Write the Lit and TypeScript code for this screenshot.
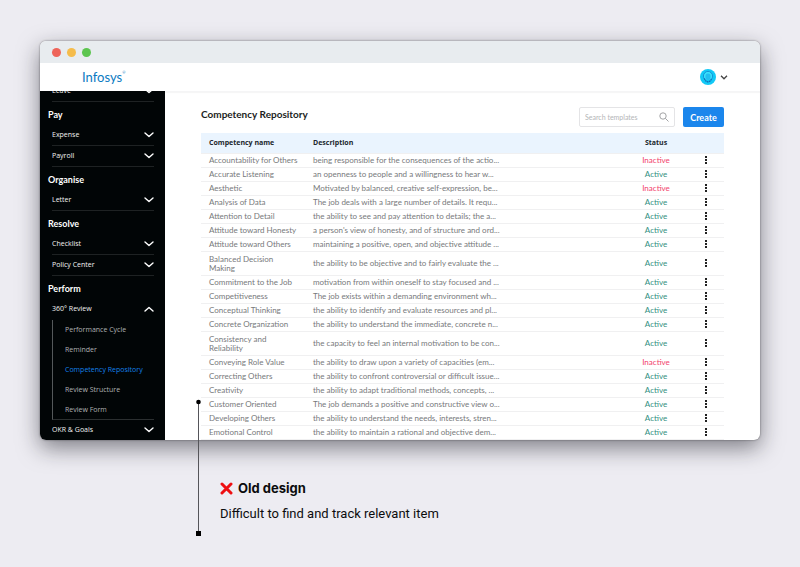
import { LitElement, html, svg, css } from "lit";
import { customElement, property } from "lit/decorators.js";

interface Competency {
  name: string;
  text: string;
  active?: boolean;
}

const row = (name: string, text: string, active = true): Competency => ({ name, text, active });

const COMPETENCIES: Competency[] = [
  row("Accountability for Others", "being responsible for the consequences of the actio...", false),
  row("Accurate Listening", "an openness to people and a willingness to hear w..."),
  row("Aesthetic", "Motivated by balanced, creative self-expression, be...", false),
  row("Analysis of Data", "The job deals with a large number of details. It requ..."),
  row("Attention to Detail", "the ability to see and pay attention to details; the a..."),
  row("Attitude toward Honesty", "a person's view of honesty, and of structure and ord..."),
  row("Attitude toward Others", "maintaining a positive, open, and objective attitude ..."),
  row("Balanced Decision\nMaking", "the ability to be objective and to fairly evaluate the ..."),
  row("Commitment to the Job", "motivation from within oneself to stay focused and ..."),
  row("Competitiveness", "The job exists within a demanding environment wh..."),
  row("Conceptual Thinking", "the ability to identify and evaluate resources and pl..."),
  row("Concrete Organization", "the ability to understand the immediate, concrete n..."),
  row("Consistency and\nReliability", "the capacity to feel an internal motivation to be con..."),
  row("Conveying Role Value", "the ability to draw upon a variety of capacities (em...", false),
  row("Correcting Others", "the ability to confront controversial or difficult issue..."),
  row("Creativity", "the ability to adapt traditional methods, concepts, ..."),
  row("Customer Oriented", "The job demands a positive and constructive view o..."),
  row("Developing Others", "the ability to understand the needs, interests, stren..."),
  row("Emotional Control", "the ability to maintain a rational and objective dem..."),
];

interface NavItem {
  label: string;
  children?: string[];
}

const NAV: { title?: string; items: NavItem[] }[] = [
  { items: [{ label: "Leave" }] },
  { title: "Pay", items: [{ label: "Expense" }, { label: "Payroll" }] },
  { title: "Organise", items: [{ label: "Letter" }] },
  { title: "Resolve", items: [{ label: "Checklist" }, { label: "Policy Center" }] },
  {
    title: "Perform",
    items: [
      {
        label: "360° Review",
        children: [
          "Performance Cycle",
          "Reminder",
          "Competency Repository",
          "Review Structure",
          "Review Form",
        ],
      },
      { label: "OKR & Goals" },
    ],
  },
];

const chevron = (up = false) => html`<svg class="chevron" viewBox="0 0 10 6" aria-hidden="true">
  ${up ? svg`<path d="M1 5 L5 1.4 L9 5" />` : svg`<path d="M1 1 L5 4.6 L9 1" />`}
</svg>`;

@customElement("side-nav")
class SideNav extends LitElement {
  @property() current = "";

  static styles = css`
    :host {
      display: block;
      overflow: hidden;
      background: #010506;
      color: #f2f2f2;
      font-family: "Open Sans", Lato, sans-serif;
      font-size: 7px;
    }
    nav {
      margin-top: -10px;
      padding: 0 11px 0 12px;
    }
    h2 {
      box-sizing: border-box;
      height: 23px;
      margin: 0 0 0 -4px;
      padding-top: 4px;
      font-family: Lato, sans-serif;
      font-size: 9px;
      line-height: 18px;
      font-weight: 700;
      color: #fff;
    }
    button {
      display: flex;
      align-items: center;
      justify-content: space-between;
      box-sizing: border-box;
      width: 100%;
      height: 21px;
      padding: 0;
      border: 0;
      border-bottom: 1px solid #1e2223;
      background: none;
      color: inherit;
      font: inherit;
      line-height: 20px;
    }
    button.open {
      border-bottom-color: transparent;
    }
    .chevron {
      width: 10px;
      height: 6px;
      fill: none;
      stroke: #fff;
      stroke-width: 1.4;
      stroke-linecap: round;
      stroke-linejoin: round;
    }
    ul {
      margin: 0;
      padding: 0 0 0 12px;
      list-style: none;
      border-left: 1px solid #54585a;
      border-bottom: 1px solid #2b2f30;
      box-sizing: border-box;
      height: 100px;
    }
    a {
      display: block;
      line-height: 20px;
      color: #b0b2b3;
      text-decoration: none;
    }
    a.current {
      color: #1482ea;
    }
  `;

  render() {
    return html`<nav aria-label="Main">
      ${NAV.map(
        (group) => html`
          ${group.title ? html`<h2>${group.title}</h2>` : ""}
          ${group.items.map(
            (item) => html`
              <button class=${item.children ? "open" : ""}>
                <span>${item.label}</span>${chevron(!!item.children)}
              </button>
              ${item.children
                ? html`<ul>
                    ${item.children.map(
                      (c) => html`<li>
                        <a href="#" class=${c === this.current ? "current" : ""}>${c}</a>
                      </li>`
                    )}
                  </ul>`
                : ""}
            `
          )}
        `
      )}
    </nav>`;
  }
}

@customElement("competency-table")
class CompetencyTable extends LitElement {
  static styles = css`
    :host {
      display: block;
    }
    table {
      width: 100%;
      table-layout: fixed;
      border-collapse: separate;
      border-spacing: 0;
    }
    .name {
      width: 112px;
    }
    .status {
      width: 64px;
    }
    .more {
      width: 36px;
    }
    th {
      height: 20px;
      padding: 0;
      border-bottom: 1px solid #f0f0f1;
      background: #eaf4fe;
      color: #20262c;
      font-family: "Open Sans", Lato, sans-serif;
      font-size: 7px;
      line-height: 10px;
      font-weight: 700;
      text-align: left;
    }
    th:first-child,
    td:first-child {
      padding-left: 8px;
    }
    td {
      box-sizing: border-box;
      height: 14px;
      padding: 0;
      border-bottom: 1px solid #f0f0f1;
      color: #77797b;
      line-height: 9px;
      white-space: nowrap;
    }
    tr.tall td {
      height: 24px;
    }
    td.label {
      white-space: pre-line;
    }
    th.mid,
    td.mid {
      text-align: center;
    }
    td.on {
      color: #2f8f80;
    }
    td.off {
      color: #f2426d;
    }
    button {
      display: block;
      margin: 0 auto;
      padding: 0;
      border: 0;
      background: none;
      height: 10px;
    }
    svg {
      display: block;
      width: 4px;
      height: 10px;
      fill: #222;
    }
  `;

  render() {
    return html`<table>
      <colgroup>
        <col class="name" />
        <col />
        <col class="status" />
        <col class="more" />
      </colgroup>
      <thead>
        <tr>
          <th>Competency name</th>
          <th>Description</th>
          <th class="mid">Status</th>
          <th></th>
        </tr>
      </thead>
      <tbody>
        ${COMPETENCIES.map(
          (c) => html`<tr class=${c.name.includes("\n") ? "tall" : ""}>
            <td class="label">${c.name}</td>
            <td>${c.text}</td>
            <td class="mid ${c.active ? "on" : "off"}">${c.active ? "Active" : "Inactive"}</td>
            <td>
              <button aria-label="More actions">
                <svg viewBox="0 0 4 10">
                  <rect x="1" y="0" width="2" height="2" />
                  <rect x="1" y="3" width="2" height="2" />
                  <rect x="1" y="6" width="2" height="2" />
                </svg>
              </button>
            </td>
          </tr>`
        )}
      </tbody>
    </table>`;
  }
}

@customElement("app-root")
class AppRoot extends LitElement {
  static styles = css`
    :host {
      display: block;
      box-sizing: border-box;
      min-height: 100vh;
      padding: 41px 40px 30px;
      background: #edecf2;
      font-family: Lato, "Open Sans", sans-serif;
      font-size: 8px;
    }
    .window {
      overflow: hidden;
      border-radius: 6px;
      background: #fff;
      box-shadow:
        0 0 2px rgba(0, 0, 0, 0.5),
        0 8px 22px rgba(20, 20, 30, 0.5);
    }
    .titlebar {
      display: flex;
      align-items: center;
      gap: 6px;
      height: 22px;
      padding-left: 12px;
      background: #e8ecef;
    }
    .light {
      width: 9px;
      height: 9px;
      border-radius: 50%;
    }
    .red {
      background: #ee6459;
    }
    .amber {
      background: #f5bc4b;
    }
    .green {
      background: #5cc54f;
    }
    .header {
      display: flex;
      align-items: center;
      justify-content: space-between;
      height: 28px;
      padding: 0 32px 0 42px;
    }
    .logo {
      display: flex;
      font-size: 13px;
      line-height: 20px;
      color: #0a7ac2;
    }
    .logo sup {
      font-size: 4px;
      line-height: 12px;
    }
    .account {
      display: flex;
      align-items: center;
      gap: 4px;
      padding: 0;
      border: 0;
      background: none;
    }
    .avatar {
      width: 16px;
      height: 16px;
    }
    .chevron {
      width: 8px;
      height: 5px;
      fill: none;
      stroke: #444;
      stroke-width: 1.3;
    }
    .body {
      display: grid;
      grid-template-columns: 125px 1fr;
    }
    side-nav {
      contain: size;
    }
    main {
      padding: 16px 36px 0;
      box-shadow: inset 0 2px 1px #f5f5f6;
    }
    .toolbar {
      display: flex;
      align-items: center;
      gap: 8px;
      height: 20px;
      margin-bottom: 6px;
    }
    h1 {
      flex: 1;
      margin: 0;
      padding-bottom: 6px;
      font-size: 10px;
      line-height: 14px;
      font-weight: 700;
      color: #1b1e22;
    }
    .search {
      display: flex;
      align-items: center;
      box-sizing: border-box;
      width: 96px;
      height: 20px;
      padding: 0 5px;
      border: 1px solid #e4e4e6;
      border-radius: 2px;
    }
    .search input {
      flex: 1;
      min-width: 0;
      padding: 0;
      border: 0;
      outline: 0;
      background: none;
      font: inherit;
      font-size: 7px;
    }
    .search input::placeholder {
      color: #b4b5b7;
    }
    .search svg {
      width: 10px;
      height: 10px;
      fill: none;
      stroke: #a2a3a5;
      stroke-width: 1;
    }
    .create {
      width: 41px;
      height: 20px;
      padding: 0;
      border: 0;
      border-radius: 2px;
      background: #1b86ec;
      color: #fff;
      font: inherit;
      font-size: 9px;
      font-weight: 700;
    }
    .note {
      position: relative;
      margin: 38px 0 0 158px;
      padding-left: 22px;
      color: #0c0c0e;
    }
    .note h2 {
      display: flex;
      align-items: center;
      gap: 5px;
      margin: 0 0 5px;
      font-family: Inter, sans-serif;
      font-size: 13px;
      line-height: 20px;
      font-weight: 700;
    }
    .note h2 svg {
      width: 13px;
      height: 13px;
      stroke: #ee0f12;
      stroke-width: 3;
      stroke-linecap: round;
    }
    .note p {
      margin: 0;
      font-family: Roboto, Inter, sans-serif;
      font-size: 13px;
      line-height: 22px;
    }
    .pointer {
      position: absolute;
      left: -2px;
      top: -79px;
      width: 5px;
      height: 137px;
    }
  `;

  render() {
    return html`
      <div class="window">
        <div class="titlebar">
          <span class="light red"></span><span class="light amber"></span
          ><span class="light green"></span>
        </div>
        <header class="header">
          <div class="logo">Infosys<sup>®</sup></div>
          <button class="account" aria-label="Account">
            <svg class="avatar" viewBox="0 0 16 16">
              <circle cx="8" cy="8" r="8" fill="#12c9f6" />
              <path d="M4.6 10.4 A4.6 4.8 0 1 1 11.4 10.4" fill="#3be0fb" stroke="#1693d6" stroke-width="1" />
              <path d="M4.4 9.4 C5 11.6 6.4 12.8 8 12.8 S11 11.6 11.6 9.4" fill="none" stroke="#1268b4" stroke-width="1.2" stroke-dasharray="1.6 .5" />
              <ellipse cx="8" cy="7.8" rx="2.6" ry="3.2" fill="#22bff0" />
            </svg>
            <svg class="chevron" viewBox="0 0 8 5"><path d="M1 .8 L4 3.8 L7 .8" /></svg>
          </button>
        </header>
        <div class="body">
          <side-nav current="Competency Repository"></side-nav>
          <main>
            <div class="toolbar">
              <h1>Competency Repository</h1>
              <label class="search">
                <input type="text" aria-label="Search templates" placeholder="Search templates" />
                <svg viewBox="0 0 10 10">
                  <circle cx="4" cy="4" r="3.2" />
                  <path d="M6.3 6.3 L9.5 9.5" />
                </svg>
              </label>
              <button class="create">Create</button>
            </div>
            <competency-table></competency-table>
          </main>
        </div>
      </div>
      <section class="note">
        <svg class="pointer" viewBox="0 0 5 137" aria-hidden="true">
          <path d="M2.5 3 V134" stroke="#55555a" stroke-width="1" />
          <circle cx="2.5" cy="3" r="2.3" />
          <rect x="0" y="132" width="5" height="5" />
        </svg>
        <h2>
          <svg viewBox="0 0 13 13" aria-hidden="true"><path d="M2 2 L11 11 M11 2 L2 11" /></svg>
          Old design
        </h2>
        <p>Difficult to find and track relevant item</p>
      </section>
    `;
  }
}
